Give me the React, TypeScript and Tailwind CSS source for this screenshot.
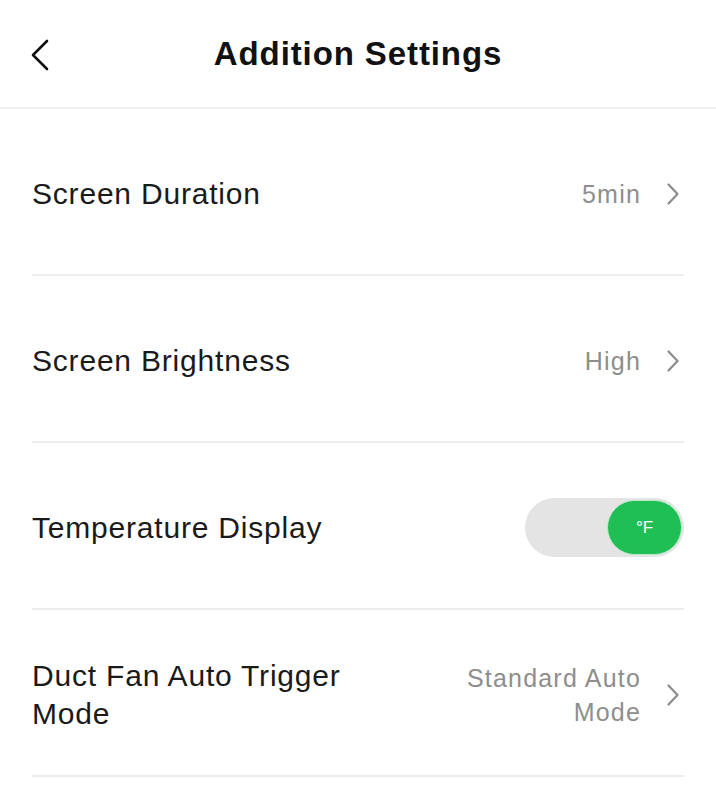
const font = { fontFamily: '"Liberation Sans", Arial, sans-serif' };

function Chevron() {
  return (
    <svg width="14" height="24" viewBox="0 0 14 24" fill="none" className="shrink-0">
      <polyline points="2.5,2.5 11.5,12 2.5,21.5" stroke="#8c8c8c" strokeWidth="2.2" strokeLinecap="round" strokeLinejoin="round" />
    </svg>
  );
}

function Row({ label, value }: { label: React.ReactNode; value?: React.ReactNode }) {
  return (
    <div className="flex h-[167px] items-center justify-between border-b-2 border-[#ededed] pt-1">
      <div className="text-[30px] leading-[38px] tracking-[0.8px] text-[#1a1a1a]">{label}</div>
      {value}
    </div>
  );
}

function Value({ children }: { children: React.ReactNode }) {
  return (
    <div className="flex items-center gap-[25px] pr-1">
      <div className="text-right text-[25px] leading-[34px] tracking-[1.2px] text-[#8e8e8e]">{children}</div>
      <Chevron />
    </div>
  );
}

export default function App() {
  return (
    <div className="min-h-screen bg-white" style={font}>
      <header className="relative flex h-[109px] items-center justify-center border-b-2 border-[#f0f0f0]">
        <svg width="22" height="32" viewBox="0 0 22 32" fill="none" className="absolute left-[30px] top-[39px]">
          <polyline points="17,2 3,16 17,30" stroke="#111" strokeWidth="2.6" strokeLinecap="round" strokeLinejoin="round" />
        </svg>
        <h1 className="text-[33px] font-bold tracking-[0.9px] text-[#111]">Addition Settings</h1>
      </header>
      <main className="px-8">
        <Row label="Screen Duration" value={<Value>5min</Value>} />
        <Row label="Screen Brightness" value={<Value>High</Value>} />
        <Row
          label="Temperature Display"
          value={
            <div className="flex h-[59px] w-[159px] items-center justify-end rounded-full bg-[#e4e4e4] pr-[2px]">
              <div className="flex h-[55px] w-[75px] items-center justify-center rounded-full border border-[#b9ebc8] bg-[#1fbf55] text-[17px] text-white">
                °F
              </div>
            </div>
          }
        />
        <Row
          label={
            <>
              Duct Fan Auto Trigger
              <br />
              Mode
            </>
          }
          value={
            <Value>
              Standard Auto
              <br />
              Mode
            </Value>
          }
        />
      </main>
    </div>
  );
}
